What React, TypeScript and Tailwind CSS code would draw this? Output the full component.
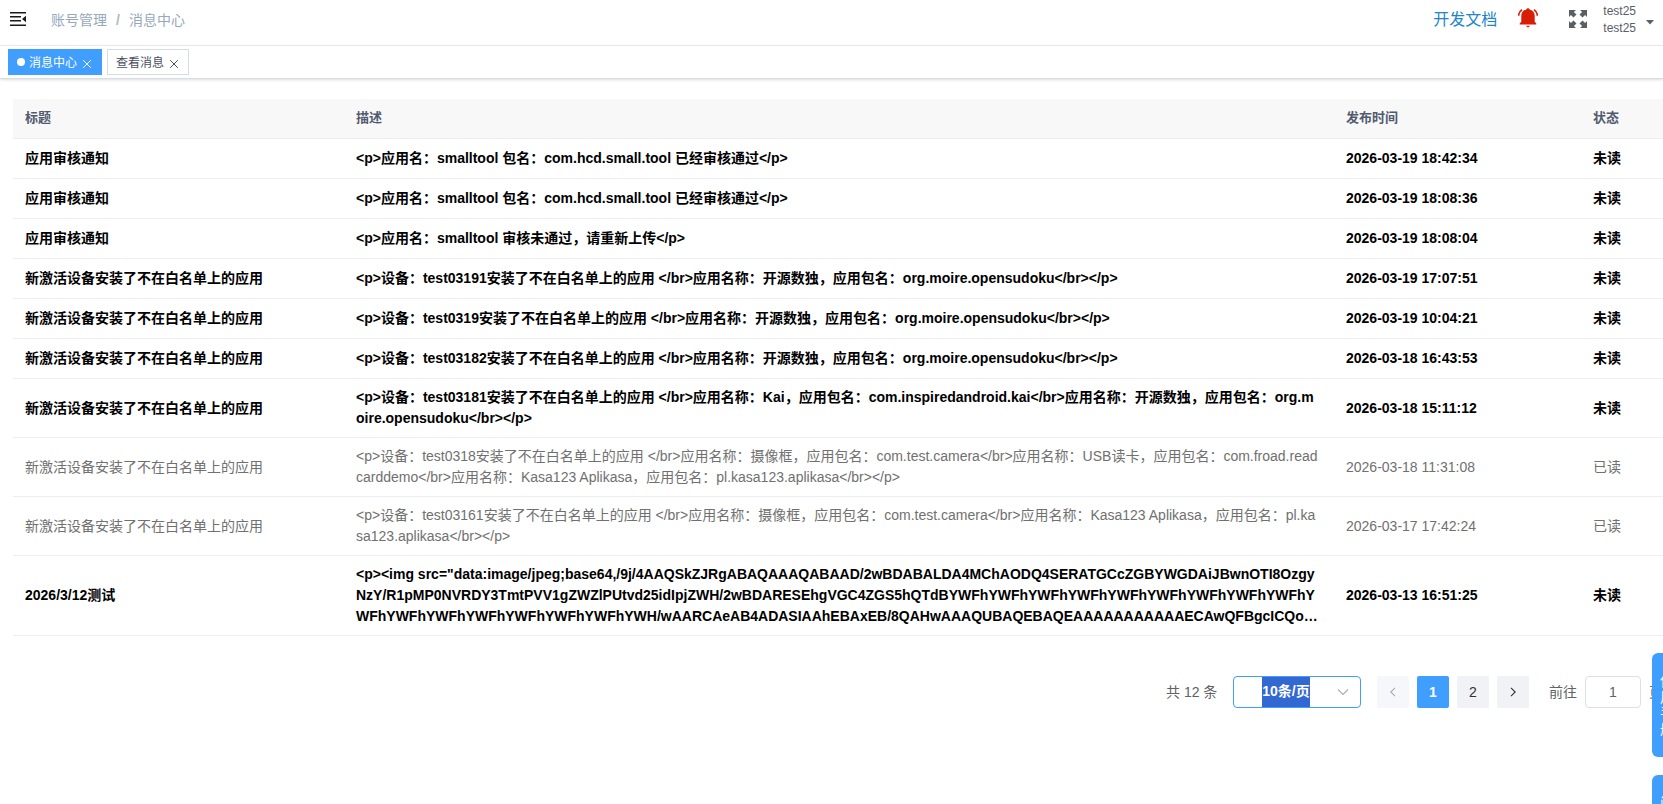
import type { ReactNode } from "react";

type Message = {
  title: string;
  description: string;
  publishedAt: string;
  read?: boolean;
};

const MESSAGES: Message[] = [
  { title: "应用审核通知", description: "<p>应用名：smalltool 包名：com.hcd.small.tool 已经审核通过</p>", publishedAt: "2026-03-19 18:42:34" },
  { title: "应用审核通知", description: "<p>应用名：smalltool 包名：com.hcd.small.tool 已经审核通过</p>", publishedAt: "2026-03-19 18:08:36" },
  { title: "应用审核通知", description: "<p>应用名：smalltool 审核未通过，请重新上传</p>", publishedAt: "2026-03-19 18:08:04" },
  { title: "新激活设备安装了不在白名单上的应用", description: "<p>设备：test03191安装了不在白名单上的应用 </br>应用名称：开源数独，应用包名：org.moire.opensudoku</br></p>", publishedAt: "2026-03-19 17:07:51" },
  { title: "新激活设备安装了不在白名单上的应用", description: "<p>设备：test0319安装了不在白名单上的应用 </br>应用名称：开源数独，应用包名：org.moire.opensudoku</br></p>", publishedAt: "2026-03-19 10:04:21" },
  { title: "新激活设备安装了不在白名单上的应用", description: "<p>设备：test03182安装了不在白名单上的应用 </br>应用名称：开源数独，应用包名：org.moire.opensudoku</br></p>", publishedAt: "2026-03-18 16:43:53" },
  { title: "新激活设备安装了不在白名单上的应用", description: "<p>设备：test03181安装了不在白名单上的应用 </br>应用名称：Kai，应用包名：com.inspiredandroid.kai</br>应用名称：开源数独，应用包名：org.moire.opensudoku</br></p>", publishedAt: "2026-03-18 15:11:12" },
  { title: "新激活设备安装了不在白名单上的应用", description: "<p>设备：test0318安装了不在白名单上的应用 </br>应用名称：摄像框，应用包名：com.test.camera</br>应用名称：USB读卡，应用包名：com.froad.readcarddemo</br>应用名称：Kasa123 Aplikasa，应用包名：pl.kasa123.aplikasa</br></p>", publishedAt: "2026-03-18 11:31:08", read: true },
  { title: "新激活设备安装了不在白名单上的应用", description: "<p>设备：test03161安装了不在白名单上的应用 </br>应用名称：摄像框，应用包名：com.test.camera</br>应用名称：Kasa123 Aplikasa，应用包名：pl.kasa123.aplikasa</br></p>", publishedAt: "2026-03-17 17:42:24", read: true },
  { title: "2026/3/12测试", description: "<p><img src=\"data:image/jpeg;base64,/9j/4AAQSkZJRgABAQAAAQABAAD/2wBDABALDA4MChAODQ4SERATGCcZGBYWGDAiJBwnOTI8OzgyNzY/R1pMP0NVRDY3TmtPVV1gZWZlPUtvd25idIpjZWH/2wBDARESEhgVGC4ZGS5hQTdBYWFhYWFhYWFhYWFhYWFhYWFhYWFhYWFhYWFhYWFhYWFhYWFhYWFhYWFhYWFhYWFhYWH/wAARCAeAB4ADASIAAhEBAxEB/8QAHwAAAQUBAQEBAQEAAAAAAAAAAAECAwQFBgcICQo…", publishedAt: "2026-03-13 16:51:25" },
];

const COLUMNS = "grid grid-cols-[331px_990px_247px_82px]";

function CloseIcon() {
  return (
    <svg viewBox="0 0 10 10" className="w-2.5 h-2.5 mt-[3px]" fill="none" stroke="currentColor" strokeWidth="1">
      <path d="M1.2 1.2l7.6 7.6M8.8 1.2L1.2 8.8" />
    </svg>
  );
}

function FoldIcon() {
  return (
    <svg viewBox="0 0 16 14" className="w-4 h-3.5" fill="#1a1a1a">
      <path d="M0 0h16v1.5H0zM0 4h11v1.5H0zM0 8h11v1.5H0zM0 12.4h16v1.6H0zM16 3.8v6.4L12 7z" />
    </svg>
  );
}

function BellIcon() {
  return (
    <svg viewBox="0 0 20 20" className="w-5 h-5" fill="#d81e06">
      <path d="M10 0.3c.9 0 1.5.6 1.6 1.2 3 .7 5.100 3 5.100 6.200v6l1.600 1.700v1.200H1.700v-1.200l1.600-1.700v-6c0-3.200 2.100-5.500 5.100-6.200C8.500.9 9.100.3 10 .3zM8.200 17.800h3.600c-.2.900-.9 1.500-1.800 1.500s-1.600-.6-1.800-1.500z" />
      <path d="M4 1.600C2 3 .8 5 .6 7.700M16 1.600C18 3 19.200 5 19.400 7.700" fill="none" stroke="#d81e06" strokeWidth="1.700" />
    </svg>
  );
}

function FullscreenIcon() {
  return (
    <svg viewBox="0 0 18 18" className="w-[18px] h-[18px]" fill="#5a5e66">
      <path d="M0 0h7L4.900 1.900l2.600 2.600-3 3-2.600-2.600L0 7zM18 0v7l-1.900-2.100-2.600 2.600-3-3 2.600-2.600L11 0zM0 18v-7l1.900 2.100 2.600-2.600 3 3-2.600 2.600L7 18zM18 18h-7l2.100-1.900-2.600-2.600 3-3 2.600 2.600 1.900-2.100z" />
    </svg>
  );
}

function Chevron({ d }: { d: string }) {
  return (
    <svg viewBox="0 0 12 12" className="w-3 h-3" fill="none" stroke="currentColor" strokeWidth="1.1">
      <path d={d} />
    </svg>
  );
}

function Tab({ active, children }: { active?: boolean; children: ReactNode }) {
  return (
    <div
      className={`flex items-center h-[26px] border text-xs ${
        active ? "w-[94px] pl-2 bg-[#409eff] border-[#409eff] text-white" : "w-[82px] pl-2 bg-white border-[#d8dce5] text-[#495060]"
      }`}
    >
      {active && <span className="w-2 h-2 mr-1 rounded-full bg-white" />}
      <span className="mr-[5px] pt-px">{children}</span>
      <CloseIcon />
    </div>
  );
}

function Navbar() {
  return (
    <div className="flex items-center justify-between h-[46px] shrink-0 pl-2.5 border-b border-[#f0f0f0]">
      <div className="flex items-center -mt-[7px]">
        <FoldIcon />
        <div className="flex items-center ml-[25px] pt-0.5 text-sm text-[#97a8be]">
          <span>账号管理</span>
          <span className="mx-[9px] font-bold text-[#b3b8c2]">/</span>
          <span>消息中心</span>
        </div>
      </div>
      <div className="flex items-center -mt-[5px] pr-[9px]">
        <span className="text-base text-[#2186c9]">开发文档</span>
        <span className="ml-[21px] -mt-[5px]"><BellIcon /></span>
        <span className="ml-[31px] -mt-0.5"><FullscreenIcon /></span>
        <div className="ml-4 text-xs leading-[17px] text-[#5a5e66]">
          <div>test25</div>
          <div>test25</div>
        </div>
        <svg viewBox="0 0 8 5" className="w-2 h-[5px] ml-2.5 mt-1" fill="#5a5e66">
          <path d="M0 0h8L4 4.500z" />
        </svg>
      </div>
    </div>
  );
}

function Pagination() {
  return (
    <div className="flex items-center h-8 mt-10 ml-[1166px] text-sm text-[#606266] whitespace-nowrap">
      <span className="w-[67px]">共 12 条</span>
      <div className="relative flex items-center w-32 h-8 border border-[#409eff] rounded">
        <span className="ml-7 w-12 h-[30px] leading-[29px] bg-[#3367d1] text-white text-sm font-semibold text-center">10条/页</span>
        <span className="absolute right-[11px] text-[#a8abb2]"><Chevron d="M1 3.500l5 5 5-5" /></span>
      </div>
      <div className="flex gap-2 ml-4 text-[#303133]">
        <span className="flex items-center justify-center w-8 h-8 rounded-xs bg-[#f5f7fa] text-[#a8abb2]"><Chevron d="M8 1.800L3.800 6 8 10.200" /></span>
        <span className="flex items-center justify-center w-8 h-8 rounded-xs bg-[#409eff] text-white font-bold">1</span>
        <span className="flex items-center justify-center w-8 h-8 rounded-xs bg-[#f0f2f5]">2</span>
        <span className="flex items-center justify-center w-8 h-8 rounded-xs bg-[#f0f2f5]"><Chevron d="M4 1.800L8.200 6 4 10.200" /></span>
      </div>
      <span className="ml-5">前往</span>
      <span className="flex items-center justify-center w-14 h-8 mx-2 border border-[#dcdfe6] rounded">1</span>
      <span>页</span>
    </div>
  );
}

export default function App() {
  return (
    <div className="relative flex flex-col w-full h-[804px] overflow-hidden bg-white font-['Liberation_Sans','Noto_Sans_CJK_SC',sans-serif]">
      <Navbar />
      <div className="flex gap-[5px] h-[33px] shrink-0 pt-[3px] pl-2 border-b border-[#d8dce5] shadow-[0_1px_3px_0_rgba(0,0,0,.12),0_0_3px_0_rgba(0,0,0,.04)]">
        <Tab active>消息中心</Tab>
        <Tab>查看消息</Tab>
      </div>

      <div className="w-[1650px] mt-5 ml-[13px] text-sm">
        <div className={`${COLUMNS} items-center h-10 border-b border-[#ebeef5] bg-[#f8f8f9] text-[13px] font-bold text-[#515a6e]`}>
          <span className="px-3">标题</span>
          <span className="px-3">描述</span>
          <span className="px-3">发布时间</span>
          <span className="px-3">状态</span>
        </div>
        {MESSAGES.map((message) => (
          <div
            key={message.publishedAt}
            className={`${COLUMNS} items-center min-h-10 py-2 border-b border-[#ebeef5] leading-[21px] ${
              message.read ? "text-[#707070]" : "font-bold text-black"
            }`}
          >
            <span className="px-3">{message.title}</span>
            <span className="px-3 break-all">{message.description}</span>
            <span className="px-3">{message.publishedAt}</span>
            <span className="px-3">{message.read ? "已读" : "未读"}</span>
          </div>
        ))}
      </div>

      <Pagination />

      {/* Floating shortcuts, cut off by the window's right edge */}
      <div className="absolute left-[1652px] top-[653px] w-10 h-[104px] pt-5 pl-2 rounded-md bg-[#409eff] text-sm leading-4 text-white">
        <div className="w-3.5 break-all">使用手册</div>
      </div>
      <div className="absolute left-[1652px] top-[775px] w-10 h-[104px] pt-5 pl-2 rounded-md bg-[#409eff] text-sm leading-4 text-white">
        <div className="w-3.5 break-all">问题反馈</div>
      </div>
    </div>
  );
}
